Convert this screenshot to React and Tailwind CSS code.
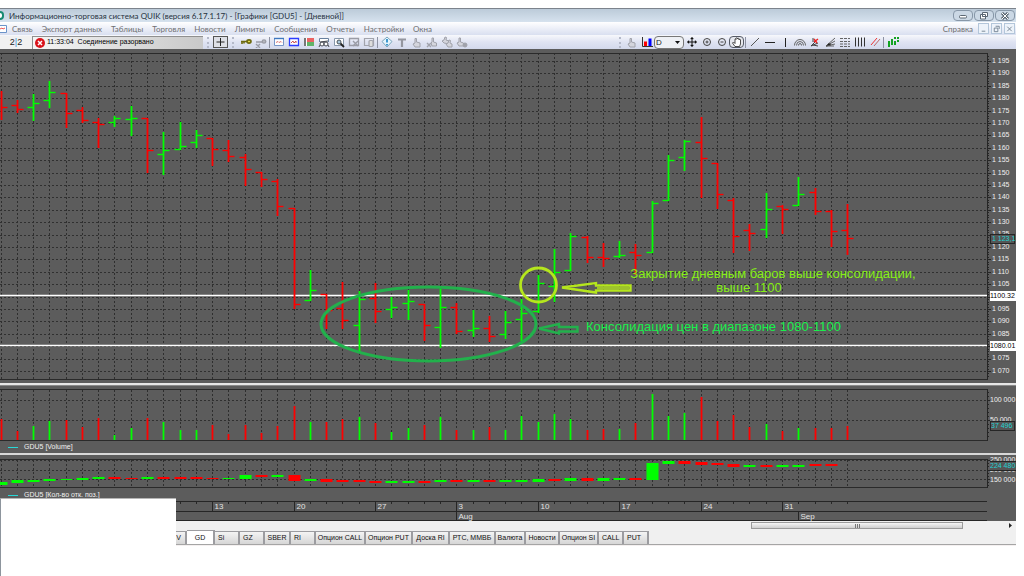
import React, { useState } from "react";

const RED = "#ff0000";
const GREEN = "#00ff00";

// [open, high, low, close, volume top, interest top, interest bottom, up, interest up]
const bars = [
  [107, 91, 120, 107, 419, 482, 485, 0, 1],
  [105, 100, 113, 109, 431, 480, 483, 0, 1],
  [107, 94, 121, 103, 426, 480, 482, 1, 1],
  [100, 81, 108, 92, 421, 479, 481, 1, 1],
  [93, 93, 128, 113, 420, 479, 480, 0, 1],
  [110, 107, 123, 120, 427, 478, 480, 0, 1],
  [122, 118, 148, 124, 418, 477, 479, 0, 1],
  [122, 116, 127, 118, 435, 477, 479, 1, 0],
  [119, 106, 136, 118, 428, 478, 479, 1, 0],
  [118, 118, 173, 150, 418, 477, 479, 0, 1],
  [154, 132, 175, 150, 422, 477, 479, 1, 0],
  [149, 122, 150, 146, 430, 477, 479, 1, 0],
  [142, 130, 148, 135, 430, 477, 479, 1, 0],
  [138, 138, 166, 149, 425, 478, 479, 0, 0],
  [150, 140, 162, 156, 434, 478, 479, 0, 1],
  [157, 154, 186, 169, 425, 475, 479, 0, 1],
  [172, 172, 187, 179, 433, 475, 477, 0, 0],
  [181, 179, 216, 206, 426, 475, 477, 0, 1],
  [208, 208, 309, 304, 406, 475, 481, 0, 0],
  [300, 270, 301, 290, 422, 479, 481, 1, 1],
  [294, 294, 329, 310, 422, 479, 482, 0, 0],
  [308, 282, 329, 320, 419, 480, 482, 0, 0],
  [325, 291, 352, 299, 417, 480, 482, 1, 0],
  [298, 283, 323, 311, 423, 481, 483, 0, 0],
  [309, 297, 318, 307, 432, 481, 483, 1, 1],
  [303, 290, 320, 301, 428, 481, 483, 1, 1],
  [304, 304, 341, 325, 425, 481, 483, 0, 0],
  [327, 289, 348, 307, 417, 480, 482, 1, 1],
  [307, 303, 334, 331, 430, 480, 482, 0, 0],
  [330, 310, 337, 328, 430, 480, 482, 1, 1],
  [328, 316, 342, 336, 427, 480, 482, 0, 0],
  [334, 311, 339, 322, 430, 480, 482, 1, 1],
  [319, 299, 341, 313, 416, 480, 482, 1, 1],
  [311, 275, 313, 283, 422, 479, 482, 1, 1],
  [286, 249, 302, 272, 414, 479, 481, 1, 0],
  [270, 233, 271, 236, 419, 478, 481, 1, 1],
  [237, 236, 263, 257, 430, 478, 481, 0, 0],
  [257, 243, 267, 258, 429, 478, 481, 0, 1],
  [256, 241, 258, 255, 429, 478, 480, 1, 1],
  [252, 244, 275, 255, 423, 478, 480, 0, 0],
  [252, 201, 253, 203, 394, 463, 480, 1, 1],
  [200, 155, 201, 160, 416, 461, 464, 1, 1],
  [157, 140, 171, 141, 413, 461, 464, 1, 0],
  [142, 117, 198, 158, 397, 462, 465, 0, 0],
  [163, 163, 209, 194, 421, 463, 465, 0, 0],
  [200, 198, 253, 236, 415, 464, 467, 0, 0],
  [230, 224, 251, 233, 427, 465, 467, 0, 1],
  [229, 193, 238, 209, 424, 465, 467, 1, 0],
  [206, 205, 234, 209, 431, 465, 467, 0, 1],
  [205, 177, 206, 194, 428, 465, 467, 1, 1],
  [192, 188, 215, 211, 428, 464, 466, 0, 0],
  [211, 210, 247, 231, 428, 464, 466, 0, 0],
  [230, 204, 255, 238, 426, 0, 0, 0, 0],
].map(([open, high, low, close, vol, top, bottom, up, oiUp], i) => ({
  x: Math.round(0.5 + 16.28 * i) + 0.5,
  open,
  high,
  low,
  close,
  vol,
  top,
  bottom,
  color: up ? GREEN : RED,
  oiColor: oiUp ? GREEN : RED,
}));

const prices = Array.from({ length: 26 }, (_, i) => 1195 - i * 5);
// these two scale marks give way to the level badges
const levels = [1100, 1080];
const priceY = (p) => Math.round(61 + (1195 - p) * 2.48) + 0.5;
const formatPrice = (p) => (levels.includes(p) ? "" : `1 ${String(p).slice(1)}`);

const menu = [
  "Связь",
  "Экспорт данных",
  "Таблицы",
  "Торговля",
  "Новости",
  "Лимиты",
  "Сообщения",
  "Отчеты",
  "Настройки",
  "Окна",
];

const tabs = [
  { name: "V", width: "w-[187px] text-right pr-1" },
  { name: "GD", width: "w-7 text-center" },
  { name: "Si", width: "w-[25px] text-left pl-[3px]" },
  { name: "GZ", width: "w-[25px] text-left pl-[3px]" },
  { name: "SBER", width: "w-[26px] text-center" },
  { name: "RI", width: "w-[25px] text-left pl-[3px]" },
  { name: "Опцион CALL", width: "w-[50px] text-center" },
  { name: "Опцион PUT", width: "w-[47px] text-center" },
  { name: "Доска RI", width: "w-[37px] text-center" },
  { name: "РТС, ММВБ", width: "w-[46px] text-center" },
  { name: "Валюта", width: "w-[30px] text-center" },
  { name: "Новости", width: "w-[34px] text-center" },
  { name: "Опцион SI", width: "w-[39px] text-center" },
  { name: "CALL", width: "w-[25px] text-left pl-[3px]" },
  { name: "PUT", width: "w-[25px] text-left pl-[3px]" },
];

const dates = { 13: "13", 18: "20", 23: "27", 28: "3", 33: "10", 38: "17", 43: "24", 48: "31" };
const months = { 28: "Aug", 49: "Sep" };

// Toolbar drawings, all on a 12x12 box
const icons = {
  key: (
    <g fill="none" stroke="#6d6a10" strokeWidth="1.6">
      <path d="M1 5.5h6M2 6v2M4 6v1.5" />
      <ellipse cx="9" cy="5.5" rx="2" ry="1.6" fill="#e8e04a" />
    </g>
  ),
  keyOff: (
    <g fill="none" stroke="#9a9ca6" strokeWidth="1.4">
      <path d="M1 6h6M1 8l4 4M5 8l-4 4" />
      <ellipse cx="9" cy="5.5" rx="1.8" ry="1.6" fill="#b5b7bf" />
    </g>
  ),
  table: (
    <g fill="none">
      <path d="M1.5 2.5h9v7h-9z" fill="#fff" stroke="#7795c8" />
      <path d="M1 2.5h10" stroke="#3f78c0" strokeWidth="1.4" />
      <path d="M3 6.5l2-1 1 1 2-1 1 1" stroke="#d77" />
    </g>
  ),
  chart: (
    <g fill="none">
      <path d="M1.5 2.5h9v7h-9z" fill="#fff" stroke="#2b3cff" strokeWidth="1.3" />
      <path d="M3 7l2-2 1 2 2-2v2" stroke="#c55" />
    </g>
  ),
  book: (
    <g strokeWidth="1.6">
      <path d="M1 2h10v8H1z" fill="#fff" />
      <path d="M4 3h7M4 5h7" stroke="#e33030" />
      <path d="M4 7h7M4 9h7" stroke="#2d9b3a" />
      <path d="M2 2v8" stroke="#555" />
    </g>
  ),
  glasses: (
    <g fill="none" stroke="#44474f">
      <path d="M1.5 6V2.5h9V6" fill="#fff" stroke="#68809f" />
      <circle cx="4" cy="8" r="2" fill="#fff" />
      <circle cx="8" cy="8" r="2" fill="#fff" />
      <path d="M2 6l8-1M1 11l1-2M11 11l-1-2" />
    </g>
  ),
  magnify: (
    <g fill="none" stroke="#4b5158">
      <path d="M1.5 2.5h9v7h-9z" fill="#fff" stroke="#8797aa" />
      <path d="M7 7l4 4" stroke="#222" strokeWidth="1.8" />
      <circle cx="6" cy="6" r="2" fill="#aac8dc" />
    </g>
  ),
  boxOff: (
    <g fill="none" stroke="#9a9ca6">
      <path d="M1.5 2.5h9v7h-9z" strokeWidth="1.3" />
      <path d="M5 5l5 5M10 5l-5 5" strokeWidth="1.4" />
    </g>
  ),
  copyOff: (
    <g fill="none" stroke="#a2a4ad" strokeWidth="1.2">
      <path d="M1.5 2.5h9v7h-9z" />
      <rect x="6" y="4.5" width="4" height="6" rx="1" fill="#ddd" />
    </g>
  ),
  alert: (
    <g>
      <path d="M6 1l5 4.5L6 11 1 5.5z" fill="#e4f4fc" stroke="#7da7bd" />
      <path d="M6 3v3.5M6 8v1.5" stroke="#1681c4" strokeWidth="1.6" />
    </g>
  ),
  text: <path d="M2 3.5h8M6 3v8" stroke="#94969f" strokeWidth="2.2" />,
  handOff: (
    <path d="M4 11L2 8l2-1V2.5h1.5V6L9 7v4z" fill="#d4d5dd" stroke="#a0a2ab" />
  ),
  handX: (
    <g stroke="#a0a2ab" fill="#d4d5dd">
      <path d="M6 10L5 7l1-1V2h1.5v4l3 1v3z" />
      <path d="M1 7l4 4M5 7l-4 4" strokeWidth="1.4" />
    </g>
  ),
  hands: (
    <g stroke="#a0a2ab" fill="#d4d5dd">
      <path d="M3 7L1 5l2-1 1-3 1.5.5L5 4l3 1v3z" />
      <path d="M7 11L5 8l2-1 1-3 1.5.5L9 7l2 1v3z" />
    </g>
  ),
  handGo: (
    <g stroke="#a0a2ab" fill="#d4d5dd">
      <path d="M3 10L1 7l2-1V2h1.5v4l3 1v3z" />
      <circle cx="9" cy="9" r="2" fill="#a0a2ab" />
    </g>
  ),
  bars: (
    <g>
      <path d="M1.5 1v9.5H12" fill="none" stroke="#333" />
      <path d="M4.5 5.5V10" stroke="#f00" strokeWidth="3" />
      <path d="M9 2.5V10" stroke="#00f" strokeWidth="3" />
    </g>
  ),
  move: (
    <g stroke="#111" fill="#111">
      <path d="M6 2v8M2 6h8" />
      <path d="M6 1l1.5 2h-3zM6 11l1.5-2h-3zM1 6l2-1.5v3zM11 6l-2-1.5v3z" strokeWidth=".3" />
    </g>
  ),
  zoomIn: (
    <g fill="none" stroke="#444">
      <circle cx="6" cy="6" r="3.5" />
      <path d="M4.5 6h3M6 4.5v3" />
    </g>
  ),
  zoomOut: (
    <g fill="none" stroke="#444">
      <circle cx="6" cy="6" r="3.5" />
      <path d="M4.5 6h3" />
    </g>
  ),
  hand: (
    <path
      d="M4 10.5L1.5 7l1-1L4 7.5v-4c0-1 1-1 1 0v-1c0-1 1.5-1 1.5 0v.5c0-1 1.5-1 1.5 0v1c0-1 1.5-1 1.5 0v4l-1 2.5z"
      fill="#fff"
      stroke="#222"
      strokeWidth=".8"
    />
  ),
  line: <path d="M2 10l8-8" stroke="#555" />,
  hline: <path d="M1 6.5h10" stroke="#222" />,
  vline: <path d="M6.5 2v9" stroke="#222" />,
  arcs: (
    <g fill="none" stroke="#555" strokeWidth=".9">
      <path d="M.5 9.5a5.5 6 0 0 1 11 0M2.5 9.5a3.5 4 0 0 1 7 0M4.5 9.5a1.5 2 0 0 1 3 0" />
    </g>
  ),
  fan: (
    <g stroke="#333" strokeWidth=".9">
      <path d="M2 10l4-4M2 10l7-3M4 9l5 1" />
      <path d="M5 3l3 4M9 3l-4 3" stroke="#e22" strokeWidth="1.4" />
      <path d="M4 2v4" />
    </g>
  ),
  gann: (
    <g stroke="#555" strokeWidth=".9">
      <path d="M2 10l9-8M2 10l9-5M2 10l9-2M2 10h8" />
      <path d="M2 10l3-3 2 2z" fill="#222" />
    </g>
  ),
  fibH: (
    <path
      d="M1 2.5h10M1 5.5h10M1 8h10M1 10.5h10"
      stroke="#555"
      strokeDasharray="3 1"
      strokeWidth=".9"
    />
  ),
  fibV: <path d="M1.5 1.5v9M4.5 1.5v9M7.5 1.5v9M10.5 1.5v9" stroke="#333" />,
  channel: (
    <g>
      <path d="M2 9l6-7" stroke="#e33" />
      <path d="M5 10l6-7" stroke="#b66" />
    </g>
  ),
  signal: (
    <g fill="#12a322">
      <path d="M1 5h2v6H1zM4 3h2v6H4zM7 5h2v4H7z" />
      <path d="M7 1h2v2H7zM10 1h2v2h-2zM10 4h2v2h-2z" />
    </g>
  ),
};

const leftTools = ["table", "chart", "book", "glasses", "magnify", "boxOff", "copyOff"];
const midTools = ["alert", "text", "handOff", "handX", "hands", "handGo"];
const drawTools = ["line", "hline", "vline", "arcs", "fan", "gann", "fibH", "fibV", "channel"];

const Tool = ({ name, pressed }) => (
  <button
    aria-label={name}
    className={
      pressed
        ? "flex h-3 w-[15px] shrink-0 items-center justify-center rounded-sm border border-[#555a66] bg-[#e6e8ee]"
        : "flex h-3 w-[15px] shrink-0 items-center justify-center"
    }
  >
    <svg viewBox="0 0 12 12" className="h-3 w-3 shrink-0">
      {icons[name]}
    </svg>
  </button>
);

const Divider = () => <div className="mx-px h-[11px] w-px shrink-0 bg-[#8d92a3]" />;

const Grip = () => (
  <div className="mx-1 h-[11px] w-0 shrink-0 border-l-2 border-dotted border-[#b4b9c9]" />
);

const TitleBar = () => (
  <header className="flex h-[14px] items-center border-t border-[#7c838c] bg-linear-to-b from-[#bccbd9] to-[#d6e2ee] text-[8px]">
    <div className="h-[9px] w-1 rounded-r-sm border-2 border-l-0 border-[#178a72] bg-white" />
    <h1 className="ml-[5px] flex-1 whitespace-nowrap text-[#26313d]">
      Информационно-торговая система QUIK (версия 6.17.1.17) - [Графики [GDU5] - [Дневной]]
    </h1>
    <div className="mr-px flex gap-px">
      <button
        aria-label="Свернуть"
        className="flex h-[11px] w-5 items-center justify-center rounded-sm border border-[#8797a8] bg-[#cbd8e5]"
      >
        <svg viewBox="0 0 10 8" className="h-2 w-[10px]">
          <rect x="1.5" y="3.5" width="7" height="2.5" rx="1" fill="#fff" stroke="#5a6672" />
        </svg>
      </button>
      <button
        aria-label="Восстановить"
        className="flex h-[11px] w-5 items-center justify-center rounded-sm border border-[#8797a8] bg-[#cbd8e5]"
      >
        <svg viewBox="0 0 10 8" className="h-2 w-[10px]">
          <path d="M3.5.5h5v4h-5zM1.5 2.5h5V7h-5zM3.5 4.5h1" fill="#fff" stroke="#5a6672" />
        </svg>
      </button>
      <button
        aria-label="Закрыть"
        className="flex h-[11px] w-5 items-center justify-center rounded-sm border border-[#8797a8] bg-[#cbd8e5]"
      >
        <svg viewBox="0 0 10 8" className="h-2 w-[10px]">
          <path d="M2 1l6 6M8 1L2 7" stroke="#5a6672" strokeWidth="3" />
          <path d="M2 1l6 6M8 1L2 7" stroke="#fff" />
        </svg>
      </button>
    </div>
  </header>
);

const MenuBar = () => (
  <nav className="flex h-[13px] items-center bg-linear-to-b from-white to-[#d9dff0] text-[8px] text-[#6f6f72]">
    <svg viewBox="0 0 7 9" className="h-[9px] w-[7px]">
      <path d="M0 1.5h6.5v7H0" fill="#fff" stroke="#6b93c9" />
      <path d="M0 5l2-1 1 1 2-1" stroke="#e55" fill="none" />
    </svg>
    <div className="ml-[5px] flex flex-1 gap-[9px] whitespace-nowrap">
      {menu.map((item) => (
        <button key={item}>{item}</button>
      ))}
    </div>
    <button className="mr-[5px]">Справка</button>
    <div className="mr-px flex gap-[2px]">
      {["M3 8h4", "M4 2.5h4v3M2.5 4.5h4v4h-4z", "M2.5 3l5 5M7.5 3l-5 5"].map((d) => (
        <button
          key={d}
          aria-label="Окно"
          className="h-[11px] w-[11px] border border-[#b3c6da] bg-[#edf3fa]"
        >
          <svg viewBox="0 0 10 10" className="h-[9px] w-[9px]">
            <path d={d} fill="none" stroke="#71808f" />
          </svg>
        </button>
      ))}
    </div>
  </nav>
);

const ToolBar = ({ period, setPeriod }) => (
  <div className="flex h-[14px] items-center overflow-hidden bg-linear-to-b from-[#f7f8fc] via-[#dfe3f2] to-[#d3d9ec]">
    <div className="h-[13px] w-8 shrink-0 bg-[#f1f1f1] text-center font-['Liberation_Sans'] text-[9px] leading-[13px] text-[#222]">
      2<span className="text-[#3b8fd6]">|</span>2
    </div>
    <div className="flex h-[13px] w-[171px] shrink-0 items-center border-l border-t border-[#8f8f8f] bg-linear-to-r from-[#f5f5f5] to-[#c9c9c9] font-['Liberation_Sans'] text-[7px] text-black">
      <svg viewBox="0 0 10 10" className="mx-[2px] h-[10px] w-[10px]">
        <circle cx="5" cy="5" r="5" fill="#d9131b" />
        <path d="M3 3l4 4M7 3L3 7" stroke="#fff" strokeWidth="1.5" />
      </svg>
      <span className="whitespace-nowrap">11:33:04&nbsp; Соединение разорвано</span>
    </div>
    <Grip />
    <button aria-label="Добавить" className="h-3 w-[15px] shrink-0 border border-[#555] bg-[#dddfe6]">
      <svg viewBox="0 0 13 10" className="h-[10px] w-[13px]">
        <path d="M6.5 1v8M2.5 5h8" stroke="#222" />
      </svg>
    </button>
    <Grip />
    <Tool name="key" />
    <Tool name="keyOff" />
    <Divider />
    {leftTools.map((name) => (
      <Tool key={name} name={name} />
    ))}
    <Divider />
    {midTools.map((name) => (
      <Tool key={name} name={name} />
    ))}
    <div className="w-[147px] shrink-0 border-r border-[#b4b9c9]" />
    <div className="mx-[3px] h-[11px] w-0 shrink-0 border-l-2 border-dotted border-[#b4b9c9]" />
    <Tool name="handOff" />
    <Tool name="bars" />
    <div className="relative h-[13px] w-[30px] shrink-0">
      <select
        aria-label="Период"
        value={period}
        onChange={(e) => setPeriod(e.target.value)}
        className="block h-[13px] w-full appearance-none rounded-sm border border-[#777] bg-[#eef0f4] pl-px font-['Liberation_Sans'] text-[8px] leading-[11px] text-[#222]"
      >
        <option>D</option>
        <option>W</option>
        <option>M</option>
      </select>
      <svg
        viewBox="0 0 5 3"
        className="pointer-events-none absolute right-1 top-[5px] h-[3px] w-[5px]"
      >
        <path d="M0 0h5L2.5 3z" fill="#111" />
      </svg>
    </div>
    <Tool name="move" />
    <Tool name="zoomIn" />
    <Tool name="zoomOut" />
    <Tool name="hand" pressed />
    <Divider />
    {drawTools.map((name) => (
      <Tool key={name} name={name} />
    ))}
    <Divider />
    <Tool name="signal" />
  </div>
);

const Columns = ({ from, to }) =>
  bars.map((b) => (
    <line key={b.x} x1={b.x} x2={b.x} y1={from} y2={to} stroke="#2e2e2e" strokeDasharray="2 2" />
  ));

const Rows = ({ at }) =>
  at.map((y) => (
    <line key={y} x1="0" x2="100%" y1={y} y2={y} stroke="#303030" strokeDasharray="2 2" />
  ));

const PricePlot = () => (
  <svg className="h-full w-full">
    <g transform="translate(0 -49)">
      <Columns from={53} to={379} />
      <Rows at={prices.map(priceY)} />
      <path d="M0 53.5h4000M0 379.5h4000" stroke="#2a2a2a" />
      <path d="M0 295.5h4000M0 345.5h4000" stroke="#fff" strokeWidth="1.5" />
      {bars.map((b, i) => (
        <g key={b.x} stroke={b.color} strokeWidth="1.4">
          <path d={`M${b.x} ${b.high}V${b.low}`} strokeWidth="1.8" />
          {i > 0 && <path d={`M${b.x - 6} ${b.open + 0.5}h6`} />}
          <path d={`M${b.x} ${b.close + 0.5}h6`} />
        </g>
      ))}
      {/* consolidation zone */}
      <g fill="none" stroke="#22b14c">
        <ellipse cx="428.5" cy="324" rx="107.5" ry="37" strokeWidth="3" />
        <path d="M539 328.5l20-4.5v3h18.5v4.5H559v2z" strokeWidth="2.4" />
      </g>
      {/* breakout bar */}
      <g stroke="#b5e61d">
        <ellipse cx="538.5" cy="285" rx="18" ry="17" fill="none" strokeWidth="2.8" />
        <path d="M562 287.5l34-4.5v2.5h34.5v5H596v2z" fill="none" strokeWidth="2.4" />
        <path d="M597 288h32" strokeWidth="1.5" />
      </g>
    </g>
  </svg>
);

const PricePanel = () => (
  <section className="flex h-[334px]">
    <div className="relative min-w-0 flex-1">
      <PricePlot />
      <p className="absolute left-[630px] top-[218px] w-[286px] whitespace-nowrap text-center font-['Liberation_Sans'] text-[13px] leading-[14px] text-[#86f015]">
        Закрытие дневным баров выше консолидации,
        <br />
        <span className="mr-12">выше 1100</span>
      </p>
      <p className="absolute left-[586px] top-[271px] whitespace-nowrap font-['Liberation_Sans'] text-[13px] leading-[14px] text-[#18f04c]">
        Консолидация цен в диапазоне 1080-1100
      </p>
    </div>
    <div className="relative flex h-[334px] w-[29px] flex-col justify-between overflow-hidden pb-[6px] pl-[5px] pt-[6px]">
      <svg className="absolute left-0 top-0 h-full w-1">
        <g transform="translate(0 -49)" stroke="#262626">
          <path d="M.5 53v327" />
          {Array.from({ length: 130 }, (_, i) => (
            <path key={i} d={`M1 ${priceY(1197 - i)}h${i % 5 === 2 ? 3 : 1}`} />
          ))}
        </g>
      </svg>
      {prices.map((p) => (
        <span key={p} className="h-3 whitespace-nowrap leading-3">
          {formatPrice(p)}
        </span>
      ))}
      <span className="absolute left-[3px] right-px top-[185px] h-[10px] whitespace-nowrap border border-[#262626] bg-[#555] pl-px leading-[8px] text-[#22d3d3]">
        1 123,1
      </span>
      <span className="absolute left-[3px] right-0 top-[242px] h-[10px] whitespace-nowrap bg-white leading-[10px] text-black">
        1100.32
      </span>
      <span className="absolute left-[3px] right-0 top-[292px] h-[10px] whitespace-nowrap bg-white leading-[10px] text-black">
        1080.01
      </span>
    </div>
  </section>
);

const Legend = ({ children }) => (
  <div className="flex h-3 items-center gap-[6px] pl-2 leading-3">
    <span className="h-px w-[10px] bg-[#28d8d8]" />
    {children}
  </div>
);

const VolumePanel = () => (
  <section className="flex h-[55px]">
    <svg className="h-full min-w-0 flex-1">
      <g transform="translate(0 -386)">
        <Columns from={390} to={440} />
        <Rows at={[400.5, 420.5]} />
        <path d="M0 389.5h4000M0 440.5h4000" stroke="#2a2a2a" />
        {bars.map((b) => (
          <path key={b.x} d={`M${b.x} ${b.vol}V440`} stroke={b.color} strokeWidth="1.8" />
        ))}
      </g>
    </svg>
    <div className="relative flex w-[29px] flex-col gap-3 overflow-hidden whitespace-nowrap pl-[3px] pt-[10px] leading-[8px]">
      <svg className="absolute left-0 top-0 h-full w-[3px]">
        <g transform="translate(0 -386)" stroke="#262626">
          <path d="M.5 389v52M1 400.5h2M1 420.5h2" />
          <path d="M1 392.5h1M1 396.5h1M1 404.5h1M1 408.5h1M1 412.5h1M1 416.5h1M1 424.5h1M1 428.5h1M1 432.5h1M1 436.5h1" />
        </g>
      </svg>
      <span>100 000</span>
      <span>50 000</span>
      <span className="absolute left-[3px] right-px top-[35px] h-[10px] border border-[#262626] bg-[#555] leading-[8px] text-[#22d3d3]">
        37 496
      </span>
    </div>
  </section>
);

const InterestPanel = () => (
  <section className="flex h-[34px]">
    <svg className="h-full min-w-0 flex-1">
      <g transform="translate(0 -455)">
        <Columns from={460} to={487} />
        <Rows at={[460.5, 470.5, 479.5]} />
        <path d="M0 459.5h4000M0 487.5h4000" stroke="#2a2a2a" />
        {bars.map((b) => (
          <rect
            key={b.x}
            x={b.x - 6}
            y={b.top}
            width="12"
            height={b.bottom - b.top}
            fill={b.oiColor}
          />
        ))}
      </g>
    </svg>
    <div className="relative flex w-[29px] flex-col gap-[2px] overflow-hidden whitespace-nowrap pl-[3px] pt-px leading-[8px]">
      <svg className="absolute left-0 top-0 h-full w-[3px]">
        <g transform="translate(0 -455)" stroke="#262626">
          <path d="M.5 459v29M1 460.5h2M1 470.5h2M1 479.5h2" />
          <path d="M1 463.5h1M1 466.5h1M1 473.5h1M1 476.5h1M1 482.5h1M1 485.5h1" />
        </g>
      </svg>
      <span>250 000</span>
      <span>200 000</span>
      <span>150 000</span>
      <span className="absolute left-[3px] right-0 top-[6px] h-[10px] border-y border-[#262626] bg-[#555] leading-[8px] text-[#22d3d3]">
        224 480
      </span>
    </div>
  </section>
);

const TimeAxis = () => (
  <div className="flex h-5">
    <svg className="h-full min-w-0 flex-1">
      <path d="M0 .5h4000M0 10.5h4000M0 19.5h4000" stroke="#262626" />
      {bars.map((b, i) => (
        <g key={b.x} stroke="#262626">
          <path d={`M${b.x} 0v${dates[i] ? 10 : 3}`} />
          {months[i] && <path d={`M${b.x} 10v9`} />}
        </g>
      ))}
      <g fill="#e4e4e4" fontSize="8">
        {bars.map((b, i) => (
          <g key={b.x}>
            {dates[i] && <text x={b.x + 2} y="8">{dates[i]}</text>}
            {months[i] && <text x={b.x + 2} y="18">{months[i]}</text>}
          </g>
        ))}
      </g>
    </svg>
    <div className="w-[29px]" />
  </div>
);

const App = () => {
  const [period, setPeriod] = useState("D");
  const [activeTab, setActiveTab] = useState("GD");

  return (
    <div className="relative min-h-screen overflow-hidden bg-white pr-2 pt-2 font-['Lato','Roboto',sans-serif]">
      <TitleBar />
      <MenuBar />
      <ToolBar period={period} setPeriod={setPeriod} />

      <main className="bg-[#5c5c5c] font-['Liberation_Sans',sans-serif] text-[7px] text-[#f0f0f0]">
        <PricePanel />
        <div className="h-[3px] border-b border-[#8a8a8a] bg-[#e6e6e6]" />
        <VolumePanel />
        <Legend>GDU5 [Volume]</Legend>
        <div className="h-[2px] bg-[#d8d8d8]" />
        <InterestPanel />
        <Legend>GDU5 [Кол-во отк. поз.]</Legend>
        <TimeAxis />
      </main>

      <div className="flex h-[9px] items-center justify-end bg-[#f0f0f0]">
        <div className="flex h-[7px] w-[212px] items-center justify-center gap-px border border-[#9b9b9b] bg-linear-to-b from-[#f6f6f6] to-[#cfcfcf]">
          <span className="h-1 w-px bg-[#777]" />
          <span className="h-1 w-px bg-[#777]" />
          <span className="h-1 w-px bg-[#777]" />
        </div>
        <svg viewBox="0 0 3 5" className="ml-[46px] mr-1 h-[5px] w-[3px]">
          <path d="M0 0l3 2.5L0 5z" fill="#222" />
        </svg>
      </div>
      <div className="flex h-[15px] items-end border-b border-[#a5a5a5] bg-[#f0f0f0] font-['Liberation_Sans'] text-[7px] text-[#111]">
        {tabs.map((tab) => (
          <button
            key={tab.name}
            onClick={() => setActiveTab(tab.name)}
            className={`${tab.width} ${
              tab.name === activeTab
                ? "h-[14px] bg-white"
                : "h-[13px] bg-linear-to-b from-[#f4f4f4] to-[#d6d6d6]"
            } shrink-0 whitespace-nowrap border-r-2 border-t border-[#9c9ca0] leading-[12px]`}
          >
            {tab.name}
          </button>
        ))}
      </div>
      <div className="h-px bg-[#f4f0f0]" />

      <div className="absolute bottom-0 left-0 top-[498px] w-[176px] border-l border-t border-l-[#8d959d] border-t-[#b5b5b5] bg-white" />
    </div>
  );
};

export default App;
